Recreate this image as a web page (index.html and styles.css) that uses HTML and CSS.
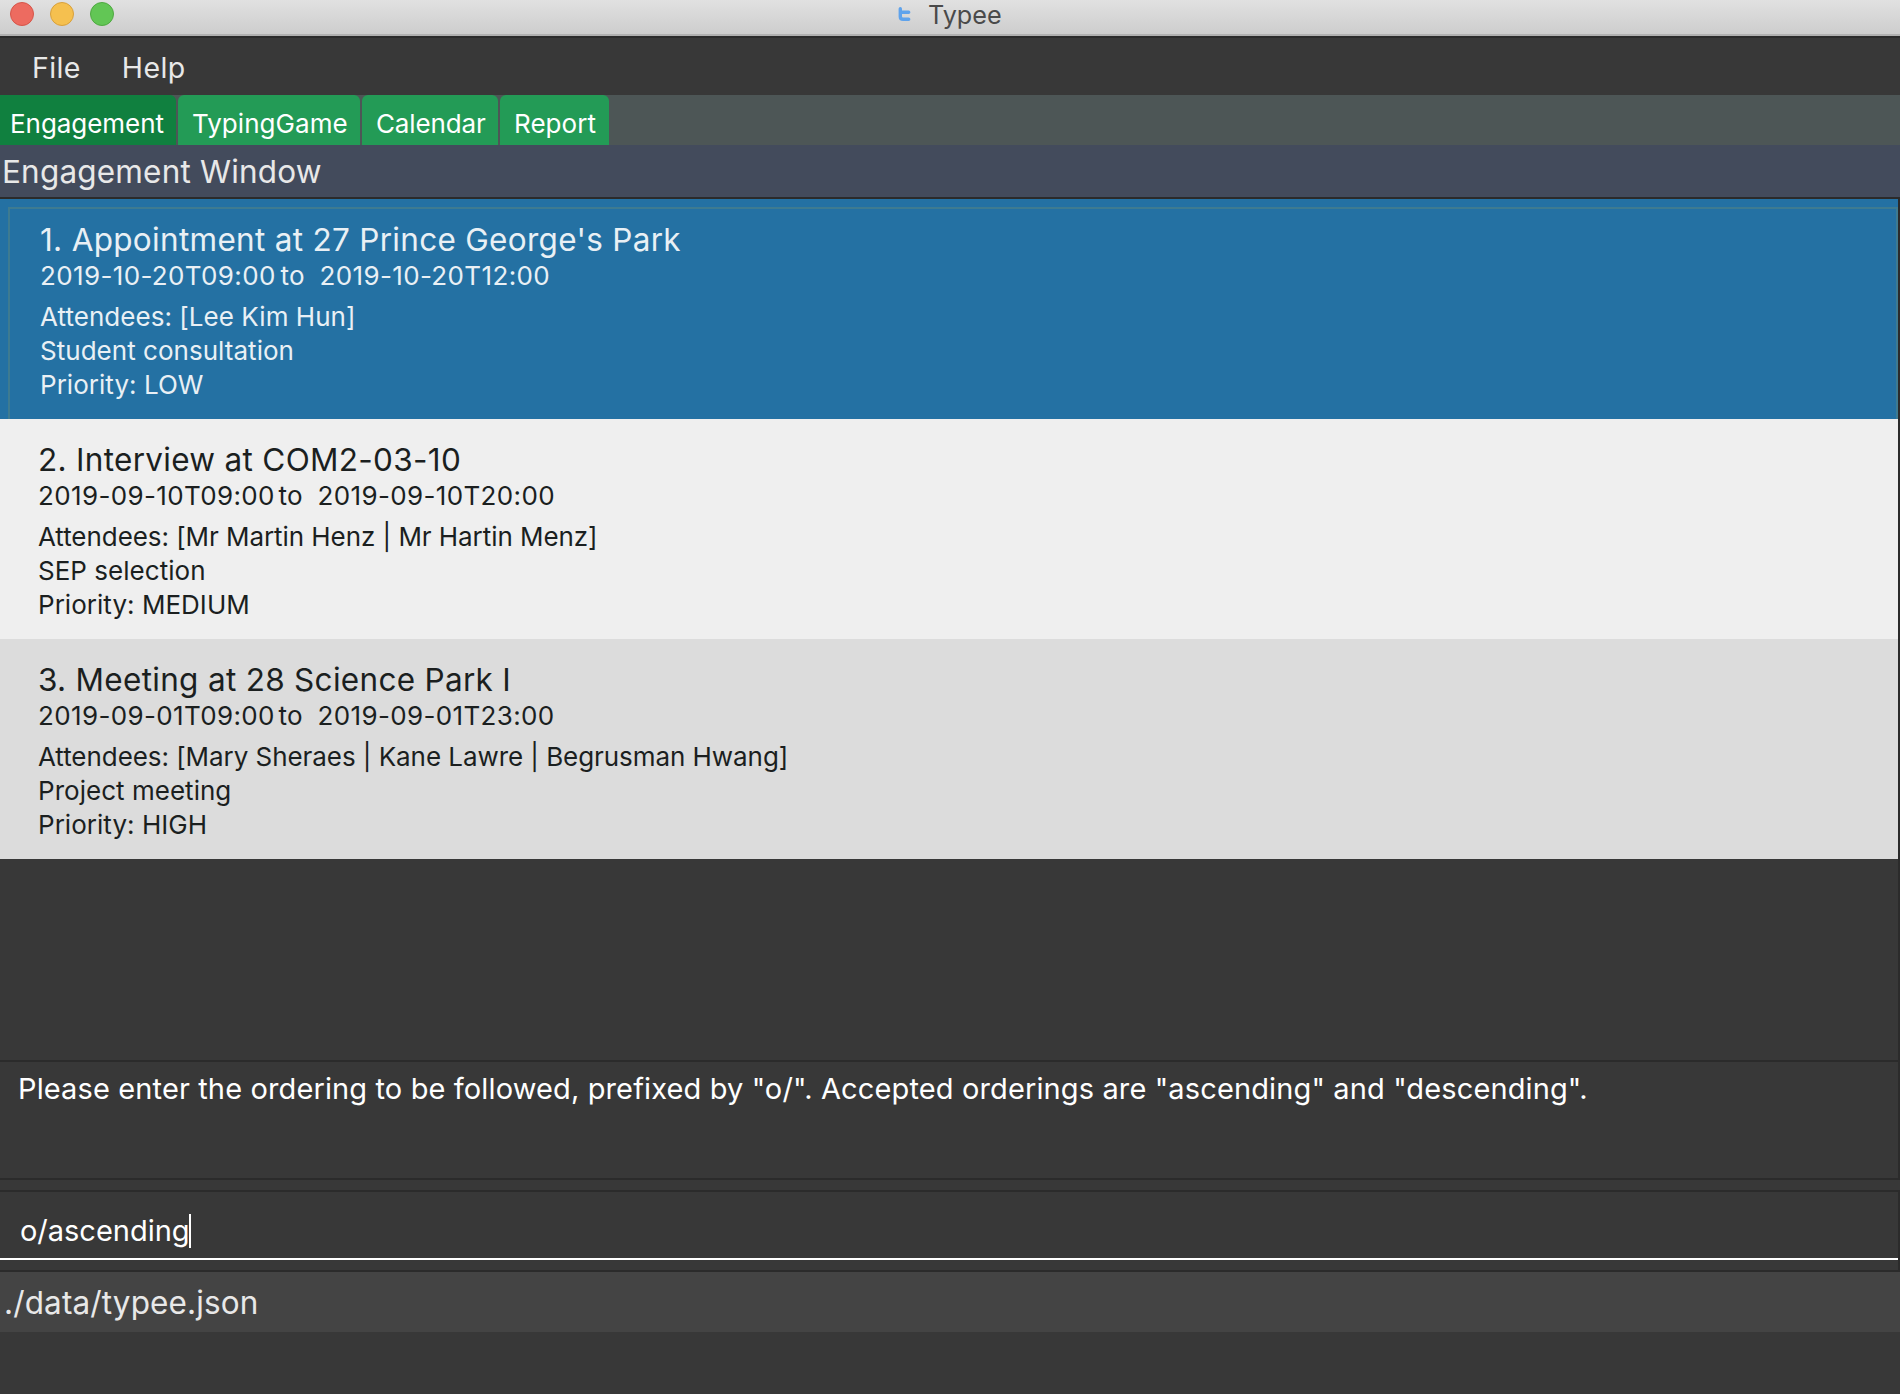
FILE: index.html
```
<!DOCTYPE html>
<html lang="en">
<head>
  <meta charset="utf-8">
  <title>Typee</title>
  <link rel="stylesheet" href="styles.css">
</head>
<body>
  <div class="window">
    <header class="titlebar">
      <div class="lights">
        <span class="light light--close"></span>
        <span class="light light--minimize"></span>
        <span class="light light--zoom"></span>
      </div>
      <div class="caption">
        <svg class="logo" width="13" height="15" viewBox="0 0 13 15" aria-hidden="true">
          <path d="M2.3 1.7V9.5Q2.3 12.3 5 12.3H10.7M2.3 5.2H10.7" fill="none" stroke="#5fa3ec" stroke-width="3.4" stroke-linecap="round"/>
        </svg>
        <span>Typee</span>
      </div>
    </header>

    <nav class="menubar">
      <span>File</span>
      <span>Help</span>
    </nav>

    <div class="tabs">
      <div class="tab tab--active">Engagement</div>
      <div class="tab tab--typing">TypingGame</div>
      <div class="tab tab--calendar">Calendar</div>
      <div class="tab tab--report">Report</div>
    </div>

    <h1 class="heading">Engagement Window</h1>

    <main class="list">
      <article class="card card--selected">
        <h2 class="name">1. Appointment at 27 Prince George's Park</h2>
        <div class="period"><span class="from">2019-10-20T09:00</span><span class="to">to</span><span>2019-10-20T12:00</span></div>
        <p class="attendees">Attendees: [Lee Kim Hun]</p>
        <p>Student consultation</p>
        <p>Priority: LOW</p>
      </article>
      <article class="card card--light">
        <h2 class="name">2. Interview at COM2-03-10</h2>
        <div class="period"><span class="from">2019-09-10T09:00</span><span class="to">to</span><span>2019-09-10T20:00</span></div>
        <p class="attendees">Attendees: [Mr Martin Henz | Mr Hartin Menz]</p>
        <p>SEP selection</p>
        <p>Priority: MEDIUM</p>
      </article>
      <article class="card card--grey">
        <h2 class="name">3. Meeting at 28 Science Park I</h2>
        <div class="period"><span class="from">2019-09-01T09:00</span><span class="to">to</span><span>2019-09-01T23:00</span></div>
        <p class="attendees">Attendees: [Mary Sheraes | Kane Lawre | Begrusman Hwang]</p>
        <p>Project meeting</p>
        <p>Priority: HIGH</p>
      </article>
    </main>

    <section class="result">Please enter the ordering to be followed, prefixed by "o/". Accepted orderings are "ascending" and "descending".</section>

    <section class="command">
      <div class="field"><span>o/ascending</span><i class="caret"></i></div>
    </section>

    <footer class="status">./data/typee.json</footer>
  </div>
</body>
</html>
```
FILE: styles.css
```
* {
  box-sizing: border-box;
}

body {
  margin: 0;
  background: #383838;
  font-family: Inter, "Liberation Sans", sans-serif;
}

h1, h2, p {
  margin: 0;
  font-weight: 400;
}

.window {
  display: flex;
  flex-direction: column;
  width: 1900px;
  height: 1394px;
  overflow: hidden;
  white-space: nowrap;
}

/* Title bar */
.titlebar {
  display: grid;
  grid-template-columns: 898px 1fr;
  height: 38px;
  background: linear-gradient(#e1e1e1, #cdcdcd 34px, #b0b0b0 34px, #b0b0b0 36px, #2b2b2b 36px);
}

.lights {
  display: flex;
  gap: 16px;
  padding: 2px 0 0 10px;
}

.light {
  width: 24px;
  height: 24px;
  border: 1px solid;
  border-radius: 50%;
}

.light--close { background: #ed6b60; border-color: #d65549; }
.light--minimize { background: #f5c04f; border-color: #d8a03c; }
.light--zoom { background: #62c655; border-color: #4fa941; }

.caption {
  display: flex;
  gap: 17px;
  font-size: 25.2px;
  line-height: 30px;
  color: #4a4a4a;
}

.logo {
  margin-top: 7px;
}

/* Menu */
.menubar {
  display: flex;
  gap: 41px;
  height: 57px;
  padding: 1px 0 0 32px;
  font-size: 28.5px;
  line-height: 58px;
  letter-spacing: 0.4px;
  color: #e8e8e8;
}

/* Tabs */
.tabs {
  display: flex;
  gap: 2px;
  height: 50px;
  background: #4d5656;
}

.tab {
  padding: 8px 0 0 14px;
  border-radius: 6px 6px 0 0;
  background: #239b56;
  color: #fff;
  font-size: 26px;
  line-height: 42px;
  letter-spacing: 0.05px;
}

.tab--active {
  width: 176px;
  padding-left: 10px;
  border-top-left-radius: 0;
  background: #10803f;
  letter-spacing: -0.05px;
}

.tab--typing { width: 182px; }
.tab--calendar { width: 136px; letter-spacing: -0.15px; }
.tab--report { width: 109px; }

.heading {
  height: 52px;
  padding-left: 2px;
  background: #434b5c;
  color: #e8e8e8;
  font-size: 31.5px;
  line-height: 53px;
  letter-spacing: 0.18px;
}

/* Engagement list */
.list {
  height: 863px;
  padding-right: 2px;
  border-top: 2px solid #2b2b2b;
  background: linear-gradient(to left, #2b2b2b 2px, #383838 2px);
}

.card {
  height: 220px;
  padding: 22px 0 0 38px;
  color: #1b1f1f;
  font-size: 26px;
  line-height: 34px;
  letter-spacing: 0.03px;
}

.card--light { background: #efefef; }
.card--grey { background: #dcdcdc; }

.card--selected {
  padding: 8px 0 0 8px;
  background: #2471a3;
  color: #e9f0f5;
}

.card--selected::before {
  content: "";
  display: block;
  height: 212px;
  margin-bottom: -200px;
  border: 2px solid #3e7b91;
  border-bottom: 0;
}

.card--selected > * {
  margin-left: 32px;
}

.name {
  font-size: 31.5px;
  line-height: 38px;
  letter-spacing: 0.3px;
}

.period {
  display: flex;
  letter-spacing: 0.36px;
}

.from { width: 240.5px; }
.to { width: 39px; }

.attendees {
  margin-top: 7px;
  letter-spacing: -0.06px;
}

.card--selected .attendees {
  letter-spacing: 0.045px;
}

/* Result display */
.result {
  height: 120px;
  padding: 9px 0 0 18px;
  border: solid #2b2b2b;
  border-width: 2px 2px 2px 0;
  color: #fff;
  font-size: 29px;
  line-height: 36px;
  letter-spacing: 0.125px;
}

/* Command box */
.command {
  height: 82px;
  margin-top: 10px;
  border: solid #2b2b2b;
  border-width: 2px 2px 2px 0;
}

.field {
  display: flex;
  height: 68px;
  padding: 22px 0 0 20px;
  border-bottom: 2px solid #fff;
  color: #fff;
  font-size: 29px;
  line-height: 34px;
  letter-spacing: -0.02px;
}

.caret {
  width: 2px;
  height: 34px;
  margin-left: -1px;
  background: #fff;
}

/* Status bar */
.status {
  height: 60px;
  padding: 1px 0 0 4px;
  background: #444;
  color: #e8e8e8;
  font-size: 31.5px;
  line-height: 60px;
  letter-spacing: 0.13px;
}
```
